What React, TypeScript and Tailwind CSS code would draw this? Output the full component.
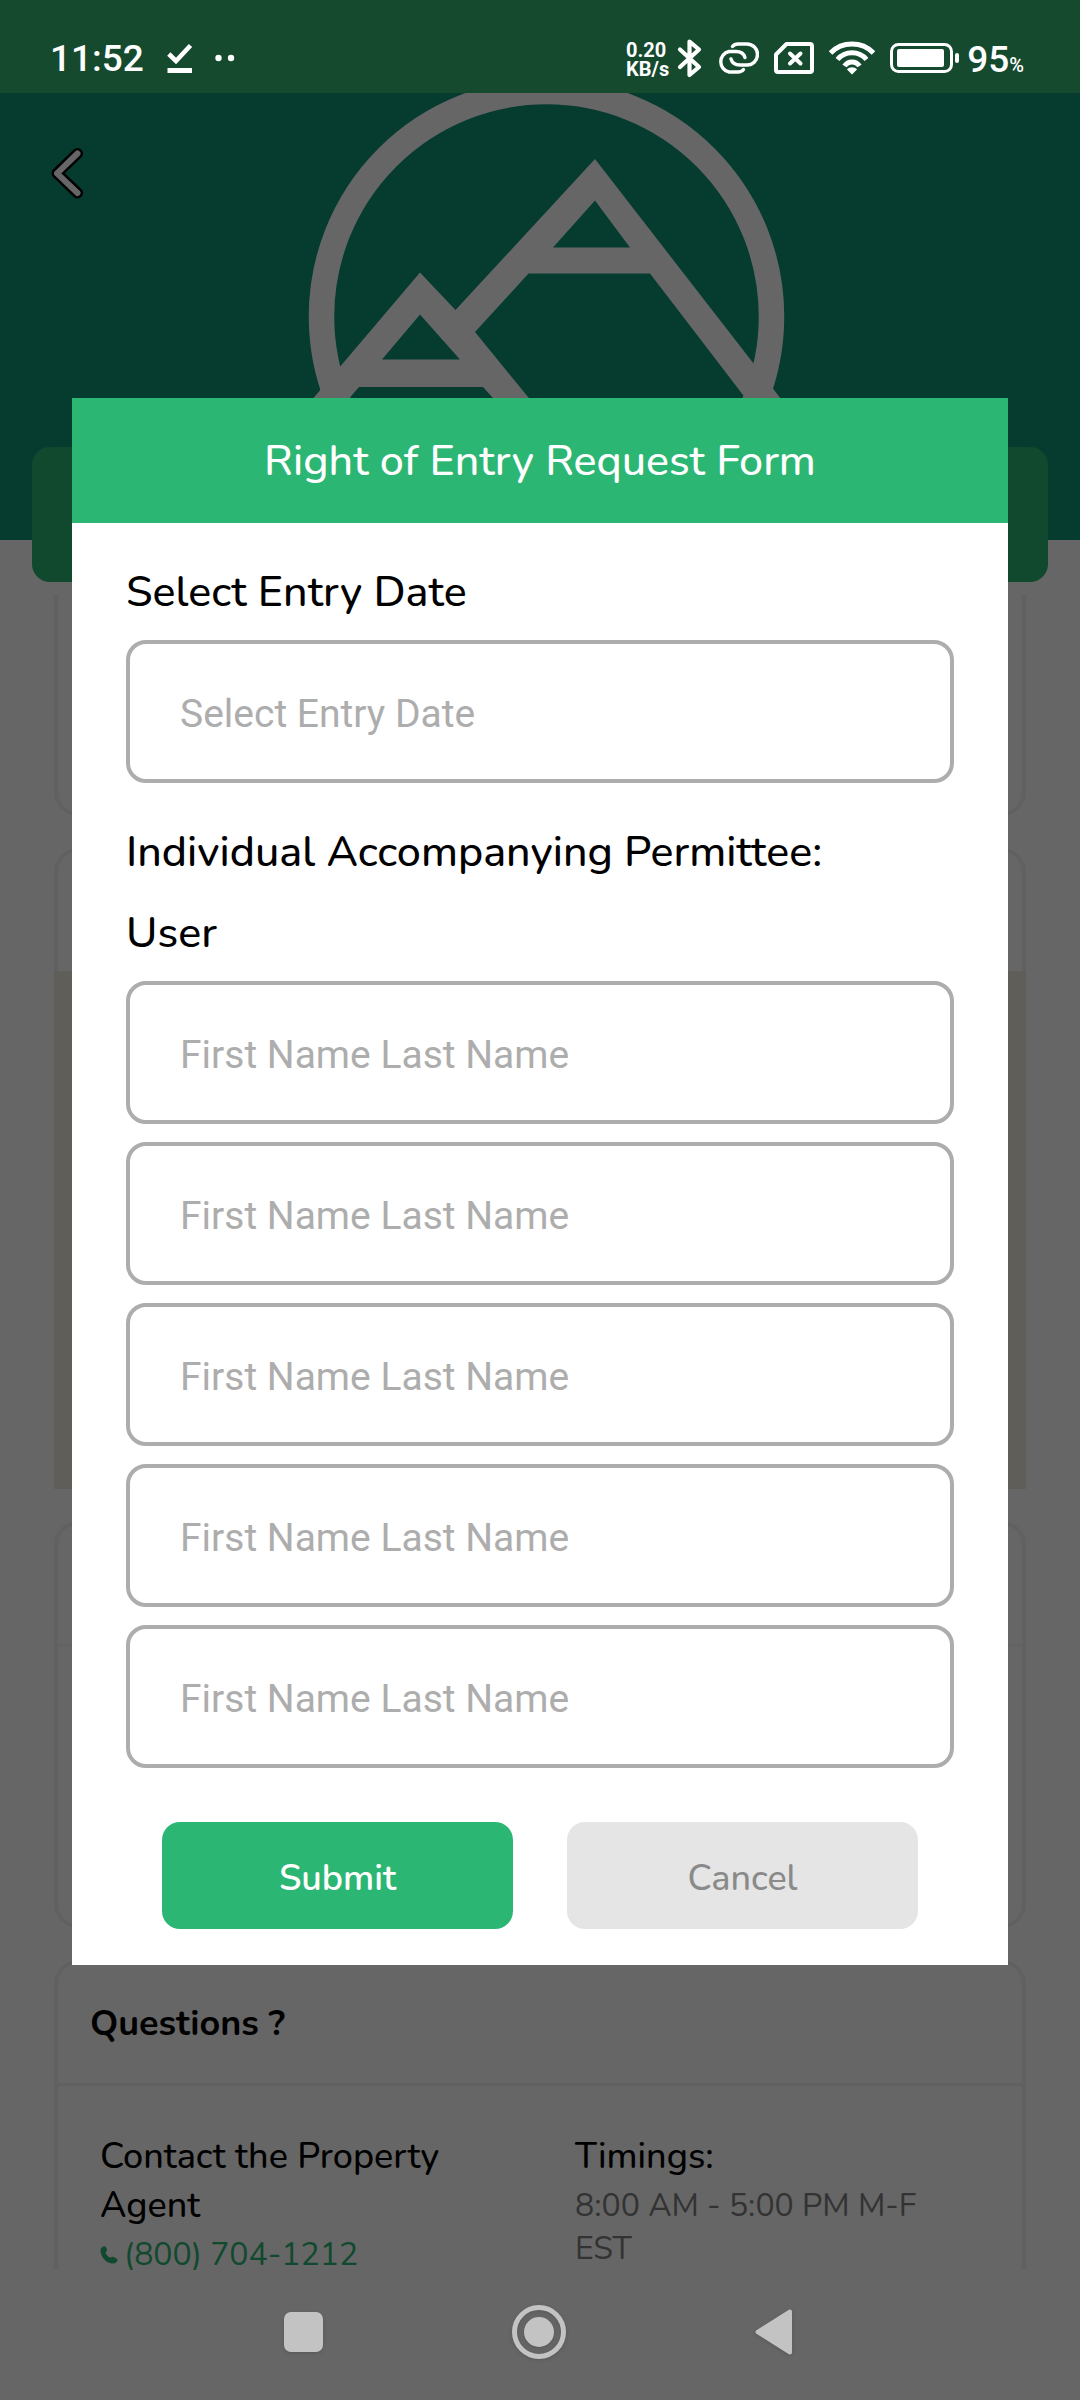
import React from "react";

const permitteeSlots = [1, 2, 3, 4, 5];

function StatusBar() {
  return (
    <header className="flex h-[93px] shrink-0 items-center justify-between bg-[#154a2f] pt-[22px] pr-14 pl-[50px] text-white">
      <div className="flex items-center">
        <time className="pt-0.5 font-[Roboto,sans-serif] text-[37px] leading-10 font-medium">11:52</time>
        <svg className="ml-[23px] h-8 w-[26px]" viewBox="0 0 26 32" fill="none" stroke="currentColor" aria-hidden="true">
          <path d="M1.8 12 L9 19 L23.5 3.5" strokeWidth="4.6" />
          <path d="M0.5 28.5 H25" strokeWidth="5" />
        </svg>
        <svg className="ml-[22px] h-2 w-5" viewBox="0 0 20 8" fill="currentColor" aria-hidden="true">
          <circle cx="3.5" cy="4" r="3.2" />
          <circle cx="16" cy="4" r="3.2" />
        </svg>
      </div>
      <div className="flex items-center">
        <div className="pt-1 font-[Roboto,sans-serif] text-xl leading-[19px] font-bold">
          <p>0.20</p>
          <p>KB/s</p>
        </div>
        <svg className="ml-2 h-10 w-[26px]" viewBox="0 0 26 40" fill="none" stroke="currentColor" strokeWidth="4.2" strokeLinecap="round" strokeLinejoin="round" aria-label="Bluetooth">
          <path d="M3 11.5 L22 29 L12.5 37 V3.5 L22 11.5 L3 29" />
        </svg>
        <svg className="ml-3.5 h-8 w-[42px]" viewBox="0 0 42 32" fill="none" stroke="currentColor" strokeWidth="3.4" strokeLinecap="round" aria-label="Linked">
          <path d="M15.5 4.5 C17 2.6 19 2 21 2 H30 A10.5 10.5 0 0 1 30 23 H23 C18.5 23 15 20.5 14 17" />
          <path d="M26.5 27.5 C25 29.4 23 30 21 30 H12 A10.5 10.5 0 0 1 12 9.5 H19 C23.5 9.5 27 12 28 15.5" />
        </svg>
        <svg className="ml-[15px] h-8 w-10" viewBox="0 0 40 32" fill="none" stroke="currentColor" strokeWidth="4" strokeLinejoin="round" aria-label="No SIM card">
          <path d="M2 12.5 L12.5 2 H36 A2 2 0 0 1 38 4 V28 A2 2 0 0 1 36 30 H4 A2 2 0 0 1 2 28 Z" />
          <path d="M16 11.5 L26.5 21.5 M26.5 11.5 L16 21.5" strokeLinecap="round" />
        </svg>
        <svg className="ml-[15px] h-[34px] w-[46px]" viewBox="0 0 46 34" fill="none" stroke="currentColor" strokeWidth="5" aria-label="Wi-Fi">
          <path d="M1.5 12 C13 0 33 0 44.5 12" />
          <path d="M8.5 18.5 C16 9.5 30 9.5 37.5 18.5" />
          <path d="M15.5 25 C19 19.5 27 19.5 30.5 25" />
          <path d="M23 33.5 L18 28.5 C20 25.5 26 25.5 28 28.5 Z" fill="currentColor" stroke="none" />
        </svg>
        <svg className="ml-[15px] h-[30px] w-[70px]" viewBox="0 0 70 30" fill="none" aria-label="Battery">
          <rect x="1.5" y="1.5" width="60" height="27" rx="7" stroke="currentColor" strokeWidth="3" />
          <rect x="7" y="6" width="47" height="18" rx="2" fill="currentColor" />
          <rect x="65" y="10" width="4" height="10" rx="2" fill="currentColor" />
        </svg>
        <p className="ml-[7px] flex items-baseline pt-1 font-[Roboto,sans-serif] text-[37px] leading-10 font-medium">
          95<span className="text-xl">%</span>
        </p>
      </div>
    </header>
  );
}

function Hero() {
  return (
    <section className="relative h-[447px] bg-[#0f9478]">
      <svg className="h-full w-full" viewBox="0 93 1080 447" preserveAspectRatio="xMidYMid slice" aria-label="Mountain logo">
        <circle cx="546.5" cy="316.5" r="225" fill="none" stroke="#fff" strokeWidth="25.5" />
        <path
          fill="#fff"
          fillRule="evenodd"
          d="M595 159 L788 408 H753 L650 273.5 H528.5 L475 332 L537 408 H502 L483 387 H359 L341 408 H305 L420 272.5 L455.5 310 Z M595 200.5 L630 247.5 H553 Z M420 314.5 L460 359.5 H382 Z"
        />
      </svg>
      <button type="button" aria-label="Back" className="absolute top-[50px] left-11">
        <svg className="h-[60px] w-12" viewBox="0 0 48 60" fill="none" strokeLinecap="round" strokeLinejoin="round" aria-hidden="true">
          <path d="M33.5 10.5 L13 30.3 L33.5 50" stroke="#000" strokeWidth="11" />
          <path d="M33.5 10.5 L13 30.3 L33.5 50" stroke="#fff" strokeWidth="6" />
        </svg>
      </button>
    </section>
  );
}

function PropertyDetails() {
  return (
    <div className="mx-[54px] mt-3">
      <section className="h-[222px] rounded-b-3xl border-4 border-t-0 border-[#f3f3f3]" />
      <section className="mt-8">
        <div className="h-[123px] rounded-t-3xl border-4 border-b-0 border-[#f3f3f3]" />
        <div className="h-[518px] bg-[#eeebde]" />
      </section>
      <section className="mt-8 h-[407px] rounded-3xl border-4 border-[#f3f3f3]">
        <div className="h-[122px] border-b-3 border-[#f7f7f7]" />
      </section>
      <section className="mt-8 rounded-t-3xl border-4 border-b-0 border-[#f3f3f3]">
        <h2 className="flex h-[122px] items-center border-b-3 border-[#f3f3f3] px-8 text-4xl font-bold">Questions ?</h2>
        <div className="grid grid-cols-2 px-[7px] pt-[46px]">
          <div className="px-[35px]">
            <h3 className="text-4xl leading-[49px] font-medium">Contact the Property Agent</h3>
            <a href="tel:+18007041212" className="flex items-center gap-[6px] text-[32px] leading-[49px] text-[#2cb673]">
              <svg className="h-[18px] w-[18px]" viewBox="0 0 18 18" fill="currentColor" aria-hidden="true">
                <path d="M0.5 5 C0.3 2.5 2 0.8 4.2 0.3 C5.5 0 6.2 1.5 6.8 3 C7.2 4.2 7 4.8 6.2 5.5 C5.3 6.3 5.5 7 6.5 8.5 C8 10.7 9.5 11.8 10.5 11.5 C11.8 11 12.3 10.5 13.5 11 C15 11.5 17.5 12.5 17.5 14 C17.4 16.5 15 17.8 12 17.5 C6 17 1 11 0.5 5 Z" />
              </svg>
              (800) 704-1212
            </a>
          </div>
          <div className="px-[35px]">
            <h3 className="text-4xl leading-[49px] font-medium">Timings:</h3>
            <p className="mt-[3px] text-[32px] leading-[43px] text-[#808080]">8:00 AM - 5:00 PM M-F EST</p>
          </div>
        </div>
      </section>
    </div>
  );
}

const fieldClass =
  "block h-[143px] w-full rounded-[20px] border-4 border-[#adadad] bg-white px-[50px] pt-1 font-[Roboto,sans-serif] text-[39px] font-normal text-black outline-none placeholder:text-[#adadad] placeholder:opacity-100";

function EntryRequestDialog() {
  return (
    <div className="absolute inset-0 flex items-center justify-center bg-black/60 px-[72px]">
      <form role="dialog" aria-labelledby="form-title" className="w-full bg-white" onSubmit={(e) => e.preventDefault()}>
        <h1 id="form-title" className="flex h-[125px] items-center justify-center bg-[#2cb673] pt-0.5 text-[43px] font-medium text-white">
          Right of Entry Request Form
        </h1>
        <div className="px-[54px] pt-[39px] pb-9 text-[43px] leading-[60px] font-medium">
          <label htmlFor="entry-date" className="mb-[18px] block">
            Select Entry Date
          </label>
          <input id="entry-date" type="text" placeholder="Select Entry Date" className={fieldClass} />
          <h2 className="mt-[39px]">Individual Accompanying Permittee:</h2>
          <h3 id="user-label" className="mt-[21px] mb-[18px]">
            User
          </h3>
          <div className="flex flex-col gap-[18px]">
            {permitteeSlots.map((slot) => (
              <input key={slot} type="text" aria-labelledby="user-label" placeholder="First Name Last Name" className={fieldClass} />
            ))}
          </div>
          <div className="mt-[54px] flex gap-[54px] px-9 text-4xl">
            <button type="submit" className="h-[107px] flex-1 rounded-[18px] bg-[#2cb673] pt-1.5 font-semibold text-white">
              Submit
            </button>
            <button type="button" className="h-[107px] flex-1 rounded-[18px] bg-[#e5e5e5] pt-1.5 font-medium text-[#8a8a8a]">
              Cancel
            </button>
          </div>
        </div>
      </form>
    </div>
  );
}

function NavigationBar() {
  return (
    <nav className="flex h-[130px] shrink-0 items-center justify-center gap-[189px] bg-[#666] pb-[6px] text-[#c3c3c3]">
      <button type="button" aria-label="Recent apps">
        <svg className="h-10 w-[39px] drop-shadow" viewBox="0 0 39 40" fill="currentColor" aria-hidden="true">
          <rect width="39" height="40" rx="7" />
        </svg>
      </button>
      <button type="button" aria-label="Home">
        <svg className="h-[54px] w-[54px] drop-shadow" viewBox="0 0 54 54" aria-hidden="true">
          <circle cx="27" cy="27" r="24.5" fill="none" stroke="currentColor" strokeWidth="5" />
          <circle cx="27" cy="27" r="15" fill="currentColor" />
        </svg>
      </button>
      <button type="button" aria-label="Back">
        <svg className="h-[46px] w-[41px] drop-shadow" viewBox="0 0 41 46" fill="currentColor" stroke="currentColor" strokeWidth="4" strokeLinejoin="round" aria-hidden="true">
          <path d="M2.5 23 L35 2.5 V43.5 Z" />
        </svg>
      </button>
    </nav>
  );
}

export default function App() {
  return (
    <div className="flex h-screen flex-col bg-white font-[Nunito,'Open_Sans',sans-serif] text-black [font-variant-ligatures:none]">
      <StatusBar />
      <main className="relative min-h-0 flex-1 overflow-hidden">
        <Hero />
        <div className="relative mx-8 -mt-[93px] h-[135px] rounded-[18px] bg-[#2cb673]" />
        <PropertyDetails />
        <EntryRequestDialog />
      </main>
      <NavigationBar />
    </div>
  );
}
